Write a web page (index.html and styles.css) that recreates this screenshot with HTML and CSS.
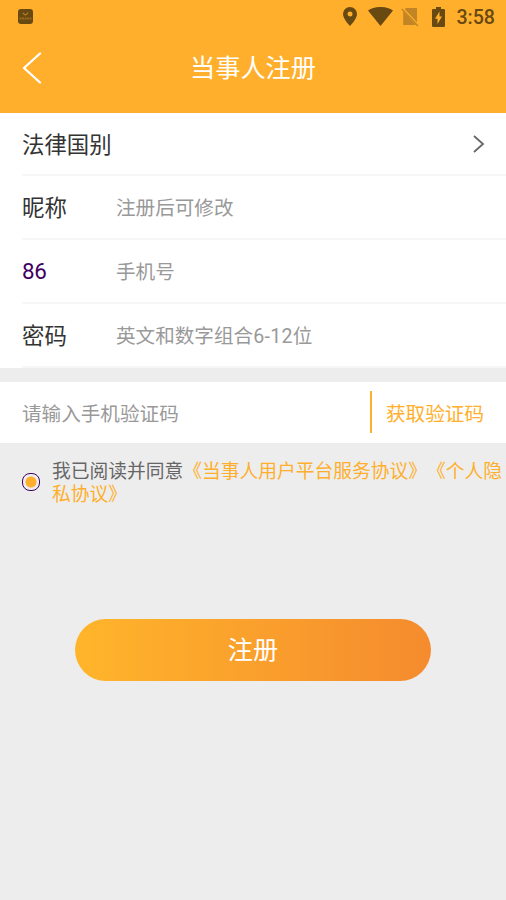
FILE: index.html
```html
<!DOCTYPE html>
<html lang="zh-CN">
<head>
<meta charset="utf-8">
<title>当事人注册</title>
<link rel="stylesheet" href="styles.css">
</head>
<body>
<header class="header">
  <div class="status">
    <svg class="app-icon" width="15" height="15" viewBox="0 0 15 15"><rect width="15" height="15" rx="3" fill="#694912"/><path d="M5 4l1.800 1.800h1.400L10.200 3.500" fill="none" stroke="#c18525" stroke-width="1.100"/><path d="M1.500 9.500h2m.6 0h2m.6 0h2m.6 0h2m.6 0h1.600" fill="none" stroke="#9a6b1d" stroke-width="2"/></svg>
    <div class="status-icons">
      <svg width="14" height="20" viewBox="0 0 14 20"><path fill-rule="evenodd" d="M7 0a7 7 0 0 0-7 7c0 5 7 12 7 12s7-7 7-12a7 7 0 0 0-7-7zm0 4.500a2.500 2.500 0 1 1 0 5 2.500 2.500 0 0 1 0-5z" fill="#694912"/></svg>
      <svg class="wifi" width="25" height="20" viewBox="0 0 25 20"><path d="M0 3.500C7-1.200 18-1.200 25 3.500L12.500 19z" fill="#694912"/></svg>
      <svg class="sim" width="18" height="20" viewBox="0 0 18 20"><path d="M5 1h11v14.200L3.800 2.200zM2.200 4.500L15 18H2.200z" fill="#c18525"/><path d="M.7 2l16.300 17" stroke="#c18525" stroke-width="1.500"/></svg>
      <svg class="battery" width="13" height="20" viewBox="0 0 13 20"><path d="M1.200 2H4V0h5v2h2.800Q13 2 13 3.200v15.600q0 1.200-1.200 1.200H1.200Q0 20 0 18.800V3.200Q0 2 1.200 2z" fill="#694912"/><path d="M7.500 4.500v5H10L5.500 17v-5.200H3z" fill="#ffaf2b"/></svg>
      <span class="clock">3:58</span>
    </div>
  </div>
  <div class="navbar">
    <svg class="back" width="20" height="32" viewBox="0 0 20 32"><path d="M18 1.500L2 16l16 14.500" fill="none" stroke="#fff" stroke-width="2.300" stroke-linecap="round" stroke-linejoin="round"/></svg>
    <h1 class="title">当事人注册</h1>
  </div>
</header>
<main>
  <section class="fields">
    <div class="row row-first"><span class="label">法律国别</span><svg class="chevron" width="12" height="18" viewBox="0 0 12 18"><path d="M1 1l9 8-9 8" fill="none" stroke="#666" stroke-width="1.800"/></svg></div>
    <div class="row"><span class="label">昵称</span><span class="hint">注册后可修改</span></div>
    <div class="row"><span class="label country-code">86</span><span class="hint">手机号</span></div>
    <div class="row"><span class="label">密码</span><span class="hint">英文和数字组合<span class="latin">6-12</span>位</span></div>
  </section>
  <section class="verify">
    <span class="hint">请输入手机验证码</span>
    <span class="get-code">获取验证码</span>
  </section>
  <section class="agreement">
    <span class="radio"></span>
    <p class="terms">我已阅读并同意<span class="link">《当事人用户平台服务协议》《个人隐私协议》</span></p>
  </section>
  <div class="submit">注册</div>
</main>
</body>
</html>
```
FILE: styles.css
```css
* { box-sizing: border-box; }
body {
  margin: 0;
  height: 900px;
  overflow: hidden;
  background: #ededed;
  font-family: Roboto, "Noto Sans CJK SC", sans-serif;
  text-spacing-trim: space-all;
}
svg { display: block; flex: none; }
.header { height: 113px; background: #ffaf2b; }
.status {
  height: 34px;
  padding: 0 11px 0 18px;
  display: flex;
  align-items: center;
  justify-content: space-between;
}
.app-icon { margin-top: -1px; }
.status-icons { display: flex; align-items: center; }
.wifi { margin-left: 11px; }
.sim { margin-left: 8px; }
.battery { margin: -1px 0 0 13px; }
.clock {
  margin-left: 11px;
  font-size: 19.600px;
  font-weight: 500;
  line-height: 34px;
  color: #694912;
  padding-top: 1px;
}
.navbar {
  height: 68px;
  display: flex;
  align-items: center;
  padding: 0 22px;
}
.title {
  flex: 1;
  margin: 0 20px 0 0;
  padding-top: 2px;
  text-align: center;
  font-size: 25.200px;
  font-weight: 400;
  line-height: 36px;
  color: #fff;
}
.fields { padding-left: 22px; background: #fff; }
.row {
  height: 64px;
  display: flex;
  align-items: center;
  border-bottom: 2px solid #f6f6f6;
}
.row-first { height: 63px; justify-content: space-between; padding-right: 21px; }
.label { width: 94px; padding-top: 2px; font-size: 22.400px; line-height: 34px; color: #333; }
.country-code { padding-top: 0; color: #400060; letter-spacing: -.3px; }
.hint { padding-top: 4px; font-size: 19.600px; line-height: 30px; color: #999; }
.latin { letter-spacing: .3px; }
.verify {
  margin-top: 14px;
  height: 61px;
  padding: 0 22px;
  display: flex;
  align-items: center;
  justify-content: space-between;
  background: #fff;
}
.get-code {
  height: 42px;
  margin-top: -1px;
  padding: 3px 0 0 14px;
  border-left: 2px solid #ffaf2b;
  font-size: 19.600px;
  line-height: 42px;
  color: #ffaf2b;
}
.agreement {
  padding: 18px 0 0 22px;
  display: flex;
  align-items: center;
}
.radio {
  flex: none;
  width: 18px;
  height: 18px;
  margin: -5px 12px 0 0;
  border: 1px solid #400060;
  border-radius: 8px;
  background: radial-gradient(circle, #ffaf2b 5px, #ededed 6px);
}
.terms {
  margin: 0;
  width: 454px;
  font-size: 18.750px;
  line-height: 23px;
  word-break: break-all;
  color: #666;
}
.link { color: #ffaf2b; }
.submit {
  width: 356px;
  height: 62px;
  margin: 112px auto 0;
  padding-top: 1px;
  border-radius: 31px;
  background: linear-gradient(90deg, #ffb52b, #f58b2e);
  text-align: center;
  font-size: 25.200px;
  line-height: 62px;
  color: #fff;
}
```
